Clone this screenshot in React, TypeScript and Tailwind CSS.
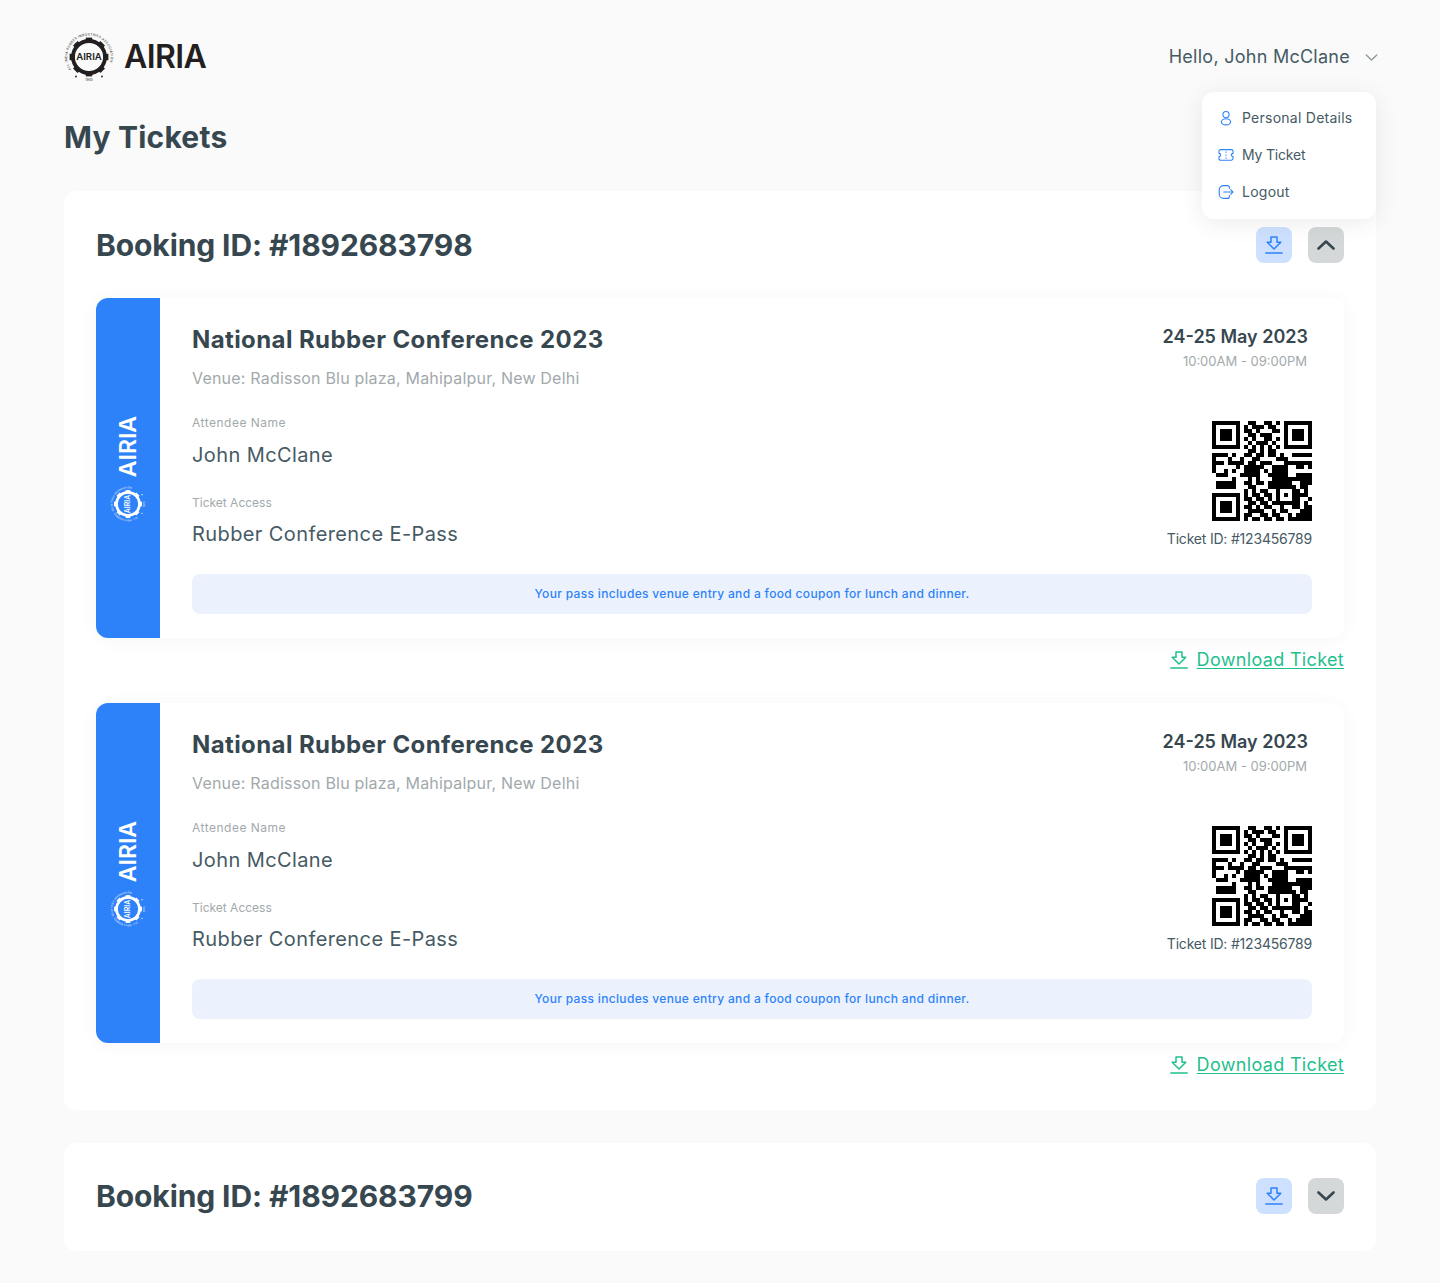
import { useId } from 'react';

const QR_ROWS = [
  '1111111001100110101111111',
  '1000001010111011001000001',
  '1011101011010001101011101',
  '1011101001101110001011101',
  '1011101010100110101011101',
  '1000001001011101001000001',
  '1111111010101010101111111',
  '0000000001101011000000000',
  '1111010011011011010011111',
  '1000100100110000111000000',
  '1110111101101110001111111',
  '1000001011111001111001101',
  '1001010011110101111000000',
  '0111000111110011111001111',
  '0000010001010001111111111',
  '0111110011011011111100111',
  '0111110001100011111110110',
  '0000000010101100100011010',
  '1111111010110110101011110',
  '1000001011011010100011001',
  '1011101001101101111111010',
  '1011101011010110010011011',
  '1011101001111001011000111',
  '1000001011001101100101111',
  '1111111010110110110111111',
];

function QrCode() {
  return (
    <svg width="100" height="100" viewBox="0 0 25 25" shapeRendering="crispEdges" className="block">
      {QR_ROWS.map((row, y) =>
        row.split('').map((cell, x) => (cell === '1' ? <rect key={`${x}-${y}`} x={x} y={y} width="1" height="1" fill="#000" /> : null)),
      )}
    </svg>
  );
}

// Gear emblem with the association name running round it
function LogoMark({ size, color }: { size: number; color: string }) {
  const id = useId();
  const teeth = [0, 45, 90, 135, 180, 225, 270, 315];
  return (
    <svg width={size} height={size} viewBox="0 0 50 50" className="block shrink-0">
      <defs>
        <path id={id} d="M7.2 37.5 A21.7 21.7 0 1 1 42.8 37.5" fill="none" />
      </defs>
      {teeth.map((deg) => (
        <rect key={deg} x="21.8" y="5.6" width="6.4" height="5" fill={color} transform={`rotate(${deg} 25 25)`} />
      ))}
      <circle cx="25" cy="25" r="16" fill="none" stroke={color} strokeWidth="3.8" />
      <text fontSize="3.3" fill={color} fontFamily="Inter, sans-serif" letterSpacing="0.32">
        <textPath href={`#${id}`}>ALL INDIA RUBBER INDUSTRIES ASSOCIATION</textPath>
      </text>
      <text x="25" y="28.4" textAnchor="middle" fontSize="9.6" fontWeight="600" fill={color} fontFamily="Inter, sans-serif">
        AIRIA
      </text>
      <circle cx="12" cy="44.5" r="0.9" fill={color} />
      <circle cx="38" cy="44.5" r="0.9" fill={color} />
      <text x="25" y="49" textAnchor="middle" fontSize="3.2" fill={color} fontFamily="Inter, sans-serif">
        1945
      </text>
    </svg>
  );
}

function DownloadIcon({ className }: { className: string }) {
  return (
    <svg viewBox="0 0 18 18" fill="none" stroke="currentColor" strokeWidth="1.5" strokeLinejoin="round" strokeLinecap="round" className={className}>
      <path d="M6 1h6v5.2h3.8L9 13 2.2 6.2H6z" />
      <path d="M.8 17h16.4" />
    </svg>
  );
}

function PersonIcon() {
  return (
    <svg width="16" height="16" viewBox="0 0 16 16" fill="none" stroke="#2e82f9" strokeWidth="1.1">
      <circle cx="8" cy="4.6" r="3.1" />
      <ellipse cx="8" cy="11.8" rx="4.6" ry="3.1" />
    </svg>
  );
}

function TicketIcon() {
  return (
    <svg width="16" height="16" viewBox="0 0 16 16" fill="none" stroke="#2e82f9" strokeWidth="1.1" strokeLinejoin="round">
      <path d="M2.6 2.6h10.8a1.6 1.6 0 0 1 1.6 1.6v2.2a1.6 1.6 0 0 0 0 3.2v2a1.6 1.6 0 0 1-1.6 1.6H2.6A1.6 1.6 0 0 1 1 12V9.6a1.6 1.6 0 0 0 0-3.2V4.2a1.6 1.6 0 0 1 1.6-1.6z" />
      <path d="M8 4.4v1.4M8 7.4v1.4M8 10.4v1.4" />
    </svg>
  );
}

function LogoutIcon() {
  return (
    <svg width="16" height="16" viewBox="0 0 16 16" fill="none" stroke="#2e82f9" strokeWidth="1.1" strokeLinecap="round" strokeLinejoin="round">
      <path d="M11.4 4.4V3.6a2 2 0 0 0-2-2H5.6A4.4 4.4 0 0 0 1.2 6v4a4.4 4.4 0 0 0 4.4 4.4h3.8a2 2 0 0 0 2-2v-.8" />
      <path d="M5.8 8h9.2M12.8 5.6 15 8l-2.2 2.4" />
    </svg>
  );
}

function Chevron({ up, className, weight }: { up?: boolean; className: string; weight: number }) {
  return (
    <svg viewBox="0 0 18 10" fill="none" stroke="currentColor" strokeWidth={weight} strokeLinecap="round" strokeLinejoin="round" className={className}>
      <path d={up ? 'M1.5 8.5 9 1.5l7.5 7' : 'M1.5 1.5 9 8.5l7.5-7'} />
    </svg>
  );
}

function ProfileMenu() {
  return (
    <div className="absolute right-0 top-[60px] z-10 flex h-[127px] w-[174px] flex-col gap-[17px] rounded-xl bg-white pl-4 pt-4 text-sm tracking-[0.25px] text-[#455a64] shadow-[0_4px_24px_rgba(0,0,0,0.08)]">
      <div className="flex h-5 items-center gap-2"><PersonIcon />Personal Details</div>
      <div className="flex h-5 items-center gap-2 tracking-[-0.2px]"><TicketIcon />My Ticket</div>
      <div className="flex h-5 items-center gap-2"><LogoutIcon />Logout</div>
    </div>
  );
}

function TicketCard() {
  return (
    <div>
      <div className="flex h-[340px] overflow-hidden rounded-xl bg-white shadow-[0_2px_20px_rgba(0,0,0,0.04)]">
        <div className="flex w-16 shrink-0 flex-col items-center justify-end bg-[#2e82f9] pb-[116px]">
          <span className="rotate-180 text-[23px] font-semibold leading-none text-white [writing-mode:vertical-rl]">AIRIA</span>
          <div className="mt-[9px] -rotate-90">
            <LogoMark size={36} color="#ffffff" />
          </div>
        </div>
        <div className="flex min-w-0 flex-1 flex-col px-8 pb-6 pt-6">
          <div className="flex justify-between">
            <div>
              <h3 className="text-[24px] font-bold leading-9 tracking-[0.4px] text-[#37474f]">National Rubber Conference 2023</h3>
              <p className="mt-2 text-base leading-6 tracking-[0.2px] text-[#a2a9ac]">Venue: Radisson Blu plaza, Mahipalpur, New Delhi</p>
              <p className="mt-6 text-xs leading-[18px] tracking-[0.5px] text-[#a2a9ac]">Attendee Name</p>
              <p className="mt-2 text-xl leading-[30px] tracking-[0.4px] text-[#455a64]">John McClane</p>
              <p className="mt-6 text-xs leading-[18px] text-[#a2a9ac]">Ticket Access</p>
              <p className="mt-[7px] text-xl leading-[30px] tracking-[0.4px] text-[#455a64]">Rubber Conference E-Pass</p>
            </div>
            <div className="flex flex-col items-end">
              <p className="mr-1 mt-px text-lg font-semibold leading-7 text-[#37474f]">24-25 May 2023</p>
              <p className="mr-[5px] text-[13px] leading-[21px] text-[#a2a9ac]">10:00AM - 09:00PM</p>
              <div className="mt-[49px]"><QrCode /></div>
              <p className="mt-2 text-sm leading-5 tracking-[-0.2px] text-[#455a64]">Ticket ID: #123456789</p>
            </div>
          </div>
          <div className="mt-auto flex h-10 items-center justify-center rounded-lg bg-[#ebf2fd] text-xs font-medium tracking-[0.33px] text-[#2e82f9]">
            Your pass includes venue entry and a food coupon for lunch and dinner.
          </div>
        </div>
      </div>
      <div className="mt-[10px] flex h-[24px] items-center justify-end gap-[9px] text-lg tracking-[0.33px] text-[#1fc08e]">
        <DownloadIcon className="h-[18px] w-[18px]" />
        <span className="underline underline-offset-2">Download Ticket</span>
      </div>
    </div>
  );
}

function BookingHeader({ id, open }: { id: string; open: boolean }) {
  return (
    <div className="flex h-9 items-center justify-between">
      <h2 className="text-[30px] font-bold leading-none tracking-[-0.1px] text-[#37474f]">Booking ID: #{id}</h2>
      <div className="flex gap-4">
        <button type="button" className="flex h-9 w-9 items-center justify-center rounded-lg bg-[#cde1fe] text-[#2e82f9]">
          <DownloadIcon className="h-[18px] w-[18px]" />
        </button>
        <button type="button" className="flex h-9 w-9 items-center justify-center rounded-lg bg-[#d5d8d9] text-[#37474f]">
          <Chevron up={open} weight={2.6} className="h-[10px] w-[18px]" />
        </button>
      </div>
    </div>
  );
}

export default function App() {
  return (
    <div className="min-h-[1283px] bg-[#fafafa] px-16 pb-8 pt-8 font-[Inter,sans-serif]">
      <header className="relative flex h-[50px] items-center justify-between">
        <div className="flex items-center gap-[10px]">
          <LogoMark size={50} color="#231f20" />
          <span className="text-[32px] font-semibold leading-none tracking-[-0.6px] text-[#231f20]">AIRIA</span>
        </div>
        <div className="-mr-[2px] flex items-center gap-[15px] text-lg tracking-[0.26px] text-[#455a64]">
          Hello, John McClane
          <Chevron weight={2} className="h-[7px] w-[13px] text-[#90999d]" />
        </div>
        <ProfileMenu />
      </header>
      <h1 className="mt-[32px] text-[30px] font-bold leading-[46px] tracking-[0.2px] text-[#37474f]">My Tickets</h1>
      <section className="mt-[31px] rounded-xl bg-white px-8 pb-[33px] pt-9">
        <BookingHeader id="1892683798" open />
        <div className="mt-[35px] flex flex-col gap-[31px]">
          <TicketCard />
          <TicketCard />
        </div>
      </section>
      <section className="mt-[33px] rounded-xl bg-white px-8 pb-[37px] pt-[35px]">
        <BookingHeader id="1892683799" open={false} />
      </section>
    </div>
  );
}
